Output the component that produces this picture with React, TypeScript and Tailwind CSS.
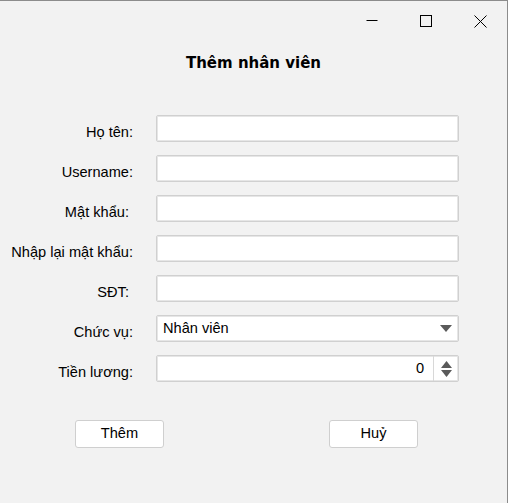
import React from "react";

const labelCls =
  "w-[133px] shrink-0 text-right pt-[9px] leading-[17px] text-[14.6px] text-black whitespace-pre";
const inputCls =
  "w-[303px] h-[27px] bg-white border border-[#d0d0d0] rounded-[2px] shadow-[inset_0_0_0_1px_#e6e6e6]";

function Row({ label, children }: { label: string; children?: React.ReactNode }) {
  return (
    <div className="flex h-[27px] gap-[23px]">
      <div className={labelCls}>{label}</div>
      {children ?? <div className={inputCls} />}
    </div>
  );
}

export default function App() {
  return (
    <div
      className="w-[510px] h-[503px] bg-white"
      style={{ fontFamily: '"Liberation Sans", Arial, sans-serif' }}
    >
      <div className="w-[508px] h-[503px] bg-[#f2f2f2] border-t border-r border-[#8c8c8c] flex flex-col">
        {/* title bar */}
        <div className="h-[40px] flex justify-end items-center shrink-0">
          <div className="w-[54px] h-[40px] flex items-center justify-center">
            <svg width="12" height="12" viewBox="0 0 12 12">
              <line x1="0.5" y1="5.5" x2="11.5" y2="5.5" stroke="#000" strokeWidth="1" />
            </svg>
          </div>
          <div className="w-[54px] h-[40px] flex items-center justify-center">
            <svg width="12" height="12" viewBox="0 0 12 12">
              <rect x="0.5" y="0.5" width="11" height="11" fill="none" stroke="#000" strokeWidth="1" />
            </svg>
          </div>
          <div className="w-[54px] h-[40px] flex items-center justify-center">
            <svg width="13" height="13" viewBox="0 0 13 13">
              <path d="M0.5 0.5 L12.5 12.5 M12.5 0.5 L0.5 12.5" stroke="#000" strokeWidth="1" />
            </svg>
          </div>
        </div>

        <div
          className="mt-[13px] text-center font-bold text-[15px] leading-[18px] text-black"
          style={{ fontFamily: '"DejaVu Sans", Verdana, sans-serif' }}
        >
          Thêm nhân viên
        </div>

        <div className="mt-[43px] flex flex-col gap-[13px]">
          <Row label="Họ tên:" />
          <Row label="Username:" />
          <Row label={"Mật khẩu:\u00a0"} />
          <Row label="Nhập lại mật khẩu:" />
          <Row label={"SĐT:\u00a0"} />
          <Row label="Chức vụ:">
            <div className={inputCls + " flex items-center justify-between pl-[6px] pr-[6px]"}>
              <span className="text-[14.6px] text-black">Nhân viên</span>
              <svg width="12" height="7" viewBox="0 0 12 7">
                <path d="M0 0 L12 0 L6 7 Z" fill="#5a5a5a" />
              </svg>
            </div>
          </Row>
          <Row label="Tiền lương:">
            <div className={inputCls + " flex items-stretch"}>
              <div className="flex-1 flex items-center justify-end pr-[9px] text-[14.6px] text-black">0</div>
              <div className="w-[25px] border-l border-[#d8d8d8] flex flex-col items-center justify-center gap-[2px]">
                <svg width="11" height="7" viewBox="0 0 11 7">
                  <path d="M0 7 L11 7 L5.5 0 Z" fill="#5a5a5a" />
                </svg>
                <svg width="11" height="7" viewBox="0 0 11 7">
                  <path d="M0 0 L11 0 L5.5 7 Z" fill="#5a5a5a" />
                </svg>
              </div>
            </div>
          </Row>
        </div>

        <div className="mt-[38px] flex pl-[75px] gap-[165px]">
          <button className="w-[89px] h-[28px] bg-white border border-[#cfcfcf] rounded-[3px] text-[14.6px] text-black">
            Thêm
          </button>
          <button className="w-[89px] h-[28px] bg-white border border-[#cfcfcf] rounded-[3px] text-[14.6px] text-black">
            Huỷ
          </button>
        </div>
      </div>
    </div>
  );
}
